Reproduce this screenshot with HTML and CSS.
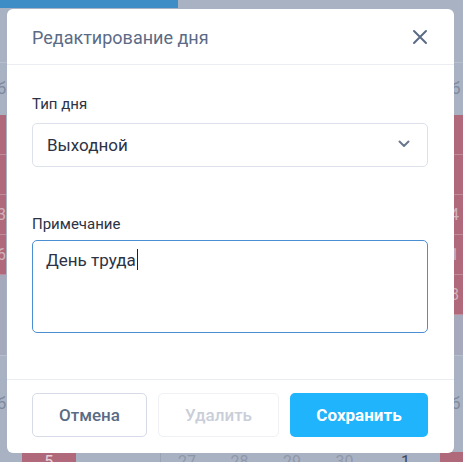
FILE: index.html
```html
<!DOCTYPE html>
<html lang="ru">
<head>
<meta charset="utf-8">
<title>Редактирование дня</title>
<link rel="stylesheet" href="styles.css">
</head>
<body>
<div class="calendar">
  <div class="cal-top"><div class="cal-tab"></div></div>
  <div class="cal-row row-head"><div class="cell left"></div><div class="mid"></div><div class="cell right"></div></div>
  <div class="cal-row row-week"><div class="cell left"><span>Сб</span></div><div class="mid"></div><div class="cell right"><span>Сб</span></div></div>
  <div class="cal-row"><div class="cell left red"></div><div class="mid"></div><div class="cell right red"></div></div>
  <div class="cal-row"><div class="cell left red"></div><div class="mid"></div><div class="cell right red"></div></div>
  <div class="cal-row"><div class="cell left red"><span>13</span></div><div class="mid"></div><div class="cell right red"><span>14</span></div></div>
  <div class="cal-row"><div class="cell left red"><span>26</span></div><div class="mid"></div><div class="cell right red"><span>21</span></div></div>
  <div class="cal-row"><div class="cell left dim"></div><div class="mid"></div><div class="cell right red"><span>28</span></div></div>
  <div class="cal-row"><div class="cell left dim"></div><div class="mid"></div><div class="cell right dim"></div></div>
  <div class="cal-row row-month"><div class="cell left"><span>Сб</span></div><div class="mid"></div><div class="cell right"><span>Сб</span></div></div>
  <div class="cal-bottom">
    <div class="b-red">5</div>
    <div class="b-gap"></div>
    <div class="b-day">27</div>
    <div class="b-day">28</div>
    <div class="b-day">29</div>
    <div class="b-day">30</div>
    <div class="b-day b-cur">1</div>
    <div class="b-red b-last"></div>
  </div>
</div>

<div class="modal">
  <div class="modal-header">
    <h2 class="modal-title">Редактирование дня</h2>
    <button class="close" aria-label="Закрыть">
      <svg width="16" height="16" viewBox="0 0 16 16"><path d="M2 2L14 14M14 2L2 14" stroke="#5b6b86" stroke-width="2" stroke-linecap="round"/></svg>
    </button>
  </div>
  <div class="modal-body">
    <div class="field">
      <label class="label">Тип дня</label>
      <div class="select">
        <span>Выходной</span>
        <svg width="12" height="8" viewBox="0 0 12 8"><path d="M1.5 1.5L6 6L10.5 1.5" fill="none" stroke="#6b7890" stroke-width="2" stroke-linecap="round" stroke-linejoin="round"/></svg>
      </div>
    </div>
    <div class="field">
      <label class="label">Примечание</label>
      <div class="textarea"><span>День труда</span><i class="caret"></i></div>
    </div>
  </div>
  <div class="modal-footer">
    <button class="btn btn-cancel">Отмена</button>
    <button class="btn btn-delete">Удалить</button>
    <button class="btn btn-save">Сохранить</button>
  </div>
</div>
</body>
</html>
```

FILE: styles.css
```css
* { box-sizing: border-box; }
html, body { margin: 0; padding: 0; }
body {
  width: 463px;
  height: 462px;
  overflow: hidden;
  background: #a9b2c3;
  font-family: Roboto, "Noto Sans", sans-serif;
  position: relative;
}

/* dimmed calendar behind */
.calendar { display: flex; flex-direction: column; width: 463px; }
.cal-top { height: 8px; display: flex; }
.cal-tab { width: 178px; background: #3f8dc6; }
.cal-row { display: flex; height: 40px; }
.row-head { height: 55px; border-bottom: 1px solid #b8bfcc; }
.row-week { height: 52px; }
.row-month { height: 97px; border-top: 1px solid #b8bfcc; }
.mid { flex: 1; }
.cell {
  display: flex;
  justify-content: flex-end;
  align-items: center;
  overflow: hidden;
  color: #c6cbd6;
  font-size: 16px;
  border-bottom: 1px solid transparent;
}
.cell.left { width: 6px; }
.cell.right { width: 23px; justify-content: flex-start; padding-left: 1px; }
.cell.red { background: #b0697b; border-bottom-color: #c08c99; color: #d1b3bc; }
.cell.dim { background: #a6a9bb; }
.row-week .cell, .row-month .cell { color: #7f899c; }

.cal-bottom { display: flex; height: 12px; font-size: 16px; color: #8f98aa; }
.b-red { width: 54px; margin-left: 22px; background: #b0697b; color: #e6d2d8; text-align: center; line-height: 20px; }
.b-gap { width: 86px; border-right: 1px solid #9aa2b3; }
.b-day { width: 53px; text-align: center; line-height: 20px; }
.b-day:first-of-type { margin-left: 6px; }
.b-cur { color: #3e4658; width: 70px; }
.b-last { margin-left: auto; width: 23px; }

/* modal */
.modal {
  position: absolute;
  left: 7px;
  top: 9px;
  width: 447px;
  height: 444px;
  background: #fff;
  border-radius: 6px;
  display: flex;
  flex-direction: column;
}
.modal-header {
  height: 56px;
  border-bottom: 1px solid #e9ecf1;
  display: flex;
  align-items: center;
  justify-content: space-between;
  padding: 0 25px 0 25px;
}
.modal-title {
  margin: 0;
  font-size: 18px;
  font-weight: 400;
  color: #5b6b86;
  position: relative;
  top: 1px;
}
.close {
  border: 0;
  background: none;
  padding: 0;
  width: 16px;
  height: 16px;
  display: flex;
  margin-right: 1px;
}
.modal-body {
  flex: 1;
  padding: 30px 26px 0 25px;
  display: flex;
  flex-direction: column;
  gap: 48px;
  border-bottom: 1px solid #e9ecf1;
}
.field { display: flex; flex-direction: column; }
.label {
  font-size: 15px;
  line-height: 18px;
  color: #2c3344;
  margin-bottom: 10px;
}
.field + .field .label { margin-bottom: 7px; }
.select {
  height: 44px;
  border: 1px solid #dde1ec;
  border-radius: 5px;
  display: flex;
  align-items: center;
  justify-content: space-between;
  padding: 0 17px 0 14px;
  font-size: 17px;
  color: #2c3344;
}
.select svg { margin-top: -3px; }
.textarea {
  height: 93px;
  border: 1px solid #4b8fd2;
  border-radius: 5px;
  padding: 8px 13px;
  font-size: 17px;
  line-height: 22px;
  color: #2c3344;
  display: flex;
  align-items: flex-start;
}
.caret {
  display: inline-block;
  width: 1px;
  height: 21px;
  background: #222;
  margin-left: 1px;
}
.modal-footer {
  display: grid;
  grid-template-columns: 115px 121px 1fr;
  gap: 11px;
  padding: 13px 26px 16px 25px;
}
.btn {
  height: 44px;
  border-radius: 5px;
  font-family: Roboto, "Noto Sans", sans-serif;
  font-size: 17px;
  font-weight: 500;
  background: #fff;
  padding: 0;
}
.btn-cancel { border: 1px solid #d6dbe7; color: #5b6b86; }
.btn-delete { border: 1px solid #eff1f5; color: #c9ced9; }
.btn-save { border: 0; background: #20b4fc; color: #fff; font-weight: 700; }
```
